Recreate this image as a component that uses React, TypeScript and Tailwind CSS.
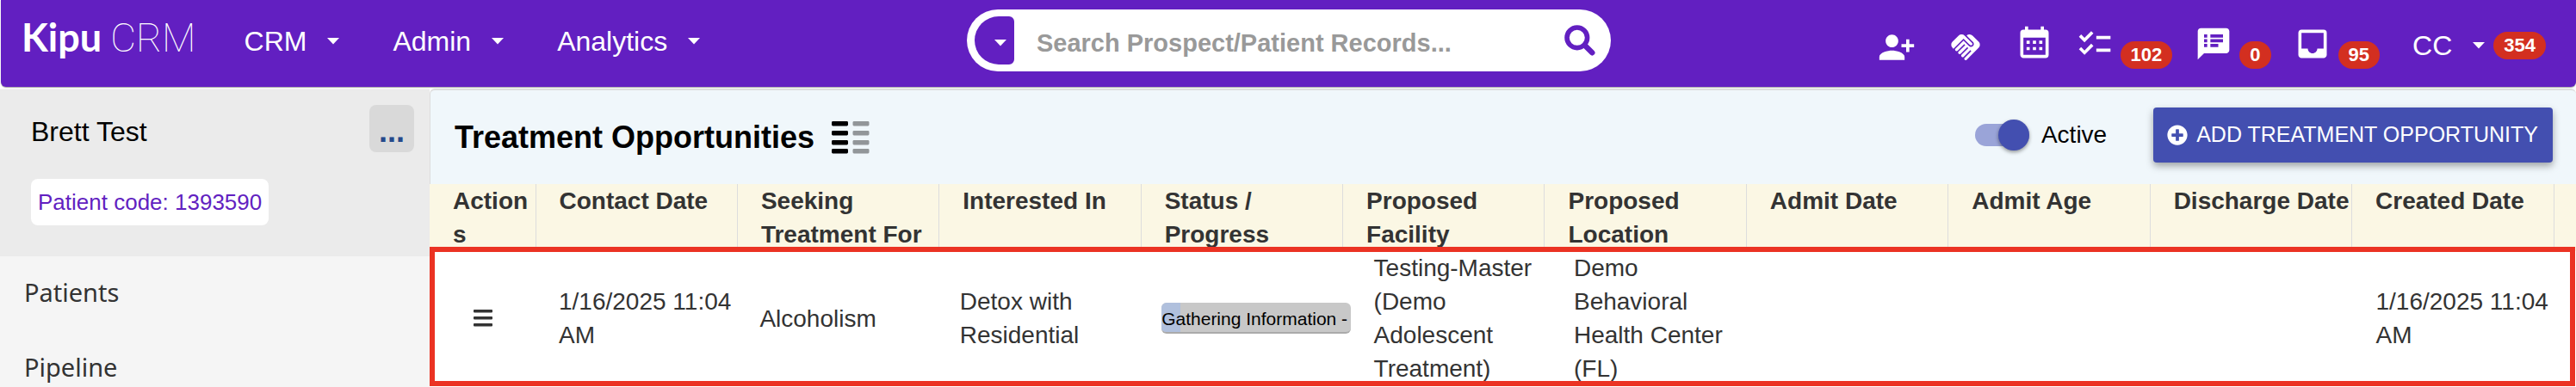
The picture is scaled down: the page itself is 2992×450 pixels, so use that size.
import type { ReactNode } from "react";
import { MdChecklist, MdHandshake, MdInbox, MdPersonAddAlt1, MdSpeakerNotes } from "react-icons/md";
import { FaPlusCircle } from "react-icons/fa";

const MENUS = ["CRM", "Admin", "Analytics"];

const COLUMNS = [
  "Contact Date",
  "Seeking Treatment For",
  "Interested In",
  "Status / Progress",
  "Proposed Facility",
  "Proposed Location",
  "Admit Date",
  "Admit Age",
  "Discharge Date",
  "Created Date",
];

function Caret() {
  return (
    <svg viewBox="0 0 14 8" className="h-2 w-3.5 shrink-0 fill-white" aria-hidden="true">
      <path d="M0 0h14L7 7.5z" />
    </svg>
  );
}

function Badge({ children }: { children: ReactNode }) {
  return (
    <span className="flex h-8 items-center rounded-full bg-[#d32f20] px-3 text-[22px] font-bold leading-8 text-white">
      {children}
    </span>
  );
}

function CalendarIcon() {
  return (
    <svg viewBox="0 0 24 24" className="size-11 fill-white" aria-hidden="true">
      <path d="M9,10V12H7V10H9M13,10V12H11V10H13M17,10V12H15V10H17M19,3A2,2 0 0,1 21,5V19A2,2 0 0,1 19,21H5C3.89,21 3,20.1 3,19V5A2,2 0 0,1 5,3H6V1H8V3H16V1H18V3H19M19,19V8H5V19H19M9,14V16H7V14H9M13,14V16H11V14H13M17,14V16H15V14H17Z" />
    </svg>
  );
}

function SearchIcon() {
  return (
    <svg viewBox="0 0 36 36" className="size-9" fill="none" stroke="#621fc1" aria-hidden="true">
      <circle cx="14.8" cy="14.8" r="11.8" strokeWidth="5.6" />
      <path d="M23.5 23.5l8.8 8.8" strokeWidth="6.4" strokeLinecap="round" />
    </svg>
  );
}

function ColumnsIcon() {
  return (
    <svg viewBox="0 0 44 38" className="h-[38px] w-11" aria-hidden="true">
      {[0, 11, 22, 32].map((y) => (
        <g key={y}>
          <rect x="0" y={y} width="19" height="5.4" rx="1.4" fill="#000" />
          <rect x="24.5" y={y} width="19" height="5.4" rx="1.4" fill="#929699" />
        </g>
      ))}
    </svg>
  );
}

function TopBar() {
  return (
    <header className="ml-px flex h-[101px] items-start justify-between rounded-b-md bg-[#621fc1] pl-6 pr-[35px] text-white shadow-[0_1px_1px_rgba(0,0,0,0.35)]">
      <div className="flex items-start">
        <a href="#home" className="flex items-baseline gap-2.5 pt-4 leading-[54px]">
          <span className="font-[Lato] text-[45px] font-bold">Kipu</span>
          <span className="font-[Roboto] text-[46px] font-thin">CRM</span>
        </a>
        <nav className="flex gap-[62px] pl-14 pt-7">
          {MENUS.map((menu) => (
            <button key={menu} type="button" className="flex items-center gap-6 text-[32px] leading-10">
              {menu}
              <Caret />
            </button>
          ))}
        </nav>
      </div>

      <form className="mt-[11px] flex h-[72px] w-[748px] items-center rounded-full bg-white pl-[9px] pr-[18px]">
        <button
          type="button"
          aria-label="Search scope"
          className="flex h-14 w-[46px] shrink-0 items-center justify-end rounded-l-[28px] rounded-r-md bg-[#621fc1] pr-[9px] pt-1.5"
        >
          <Caret />
        </button>
        <input
          type="text"
          aria-label="Search Prospect/Patient Records"
          placeholder="Search Prospect/Patient Records..."
          className="h-14 min-w-0 flex-1 bg-transparent px-[26px] pt-1.5 text-[29px] font-bold text-[#333] outline-none placeholder:text-[#999]"
        />
        <button type="submit" aria-label="Search">
          <SearchIcon />
        </button>
      </form>

      <div className="flex items-start gap-[26px] pt-[29px]">
        <div className="flex gap-9 pr-2.5 pt-1">
          <a href="#add-contact" aria-label="Add contact">
            <MdPersonAddAlt1 className="size-11" />
          </a>
          <a href="#referrals" aria-label="Referrals" className="flex size-11 items-center justify-center">
            <MdHandshake className="size-10" />
          </a>
        </div>
        <a href="#calendar" aria-label="Calendar">
          <CalendarIcon />
        </a>
        <a href="#tasks" aria-label="Tasks" className="flex items-start gap-2">
          <MdChecklist className="size-11" />
          <span className="pt-[19px]">
            <Badge>102</Badge>
          </span>
        </a>
        <a href="#messages" aria-label="Messages" className="flex items-start gap-2">
          <MdSpeakerNotes className="size-11" />
          <span className="pt-[19px]">
            <Badge>0</Badge>
          </span>
        </a>
        <a href="#inbox" aria-label="Inbox" className="flex items-start gap-2">
          <MdInbox className="size-11" />
          <span className="pt-[19px]">
            <Badge>95</Badge>
          </span>
        </a>
        <button type="button" className="flex items-center pl-3 pt-1 text-[32px] leading-10">
          CC
          <span className="flex items-center gap-2.5 pl-6">
            <Caret />
            <Badge>354</Badge>
          </span>
        </button>
      </div>
    </header>
  );
}

function Sidebar() {
  return (
    <aside className="w-[499px] shrink-0 bg-[#f5f5f5] pb-3">
      <section className="h-[194px] bg-[#ebebeb] pl-9 pr-[18px] pt-[18px]">
        <div className="flex items-center justify-between">
          <h2 className="pt-1.5 text-[32px] leading-10 text-black">Brett Test</h2>
          <button
            type="button"
            aria-label="More"
            className="flex h-[55px] w-[52px] items-center justify-center rounded-lg bg-[#d9d9d9] pt-1.5 text-4xl font-bold text-[#25498b]"
          >
            ...
          </button>
        </div>
        <p className="mt-[31px] w-fit rounded-lg bg-white px-2 text-[26px] leading-[54px] text-[#621fc1]">
          Patient code: 1393590
        </p>
      </section>
      <nav className="flex flex-col gap-[47px] pl-7 pt-[22px] font-['Noto_Sans'] text-[29px] leading-10 text-[#333]">
        <a href="#patients">Patients</a>
        <a href="#pipeline">Pipeline</a>
      </nav>
    </aside>
  );
}

function PanelHeading() {
  return (
    <div className="flex h-[111px] items-center justify-between rounded-t-md border-l border-t-2 border-[#ddd] bg-[#f0f7fb] pl-7 pr-[27px]">
      <div className="flex items-center gap-5">
        <h1 className="text-4xl font-bold leading-[52px] text-black">Treatment Opportunities</h1>
        <button type="button" aria-label="Choose columns">
          <ColumnsIcon />
        </button>
      </div>
      <div className="flex items-center gap-[54px] pb-1.5">
        <label className="flex items-center gap-3.5 text-[28px] leading-9 text-black">
          <input type="checkbox" role="switch" defaultChecked className="peer sr-only" />
          <span className="flex h-[26px] w-[63px] items-center justify-end rounded-full bg-[#9aa4d8]">
            <span className="size-9 shrink-0 rounded-full bg-[#434fb0] shadow-[0_2px_4px_rgba(0,0,0,0.4)]" />
          </span>
          Active
        </label>
        <button
          type="button"
          className="flex h-16 items-center gap-2.5 rounded bg-[#434fb0] pl-4 pr-[17px] text-[25px] text-white shadow-[0_4px_8px_rgba(0,0,0,0.35)]"
        >
          <FaPlusCircle className="size-6" />
          ADD TREATMENT OPPORTUNITY
        </button>
      </div>
    </div>
  );
}

function StatusBar() {
  return (
    <div className="relative h-9 w-[220px] overflow-hidden rounded-md border-b-2 border-[#aaa] bg-[#c8c8c8]">
      <div className="h-9 w-[10%] bg-[#b0c0dd]" />
      <span className="absolute inset-0 whitespace-nowrap text-[21px] leading-[38px] text-black">
        Gathering Information -
      </span>
    </div>
  );
}

function OpportunitiesTable() {
  return (
    <div className="relative">
      <table className="w-full table-fixed border-collapse text-[28px] leading-[39px] text-[#333]">
        <colgroup>
          <col className="w-[123px]" />
          {COLUMNS.map((name) => (
            <col key={name} />
          ))}
          <col className="w-[26px]" />
        </colgroup>
        <thead>
          <tr className="bg-[#fbf7e4] text-left align-top">
            <th className="break-words p-0 pl-[27px] pr-1">Actions</th>
            {COLUMNS.map((name) => (
              <th key={name} className="border-l border-[#ddd] p-0 pl-[27px]">
                {name}
              </th>
            ))}
            <th className="border-l border-[#ddd] p-0" />
          </tr>
        </thead>
        <tbody>
          <tr className="bg-white">
            <td className="p-0 pl-[51px]">
              <button type="button" aria-label="Row actions" className="block">
                <svg viewBox="0 0 22 20" className="h-5 w-[22px] fill-[#333]" aria-hidden="true">
                  <rect x="0" y="0" width="22" height="3.4" rx="0.8" />
                  <rect x="0" y="8" width="22" height="3.4" rx="0.8" />
                  <rect x="0" y="16" width="22" height="3.4" rx="0.8" />
                </svg>
              </button>
            </td>
            <td className="p-0 pl-[27px]">1/16/2025 11:04 AM</td>
            <td className="p-0 pl-[26px]">Alcoholism</td>
            <td className="p-0 pl-6">Detox with Residential</td>
            <td className="p-0 pl-6">
              <StatusBar />
            </td>
            <td className="p-0 pl-9">Testing-Master (Demo Adolescent Treatment)</td>
            <td className="p-0 pl-[34px]">Demo Behavioral Health Center (FL)</td>
            <td />
            <td />
            <td />
            <td className="p-0 pl-7">1/16/2025 11:04 AM</td>
            <td />
          </tr>
        </tbody>
      </table>
      <div className="pointer-events-none absolute -bottom-px left-0 right-px top-[73px] border-6 border-[#eb3323]" />
    </div>
  );
}

export default function App() {
  return (
    <div className="bg-white font-['Liberation_Sans',Arial,sans-serif]">
      <TopBar />
      <div className="flex pt-0.5">
        <div className="flex shrink-0 bg-[#f5f5f5] pt-px">
          <Sidebar />
        </div>
        <main className="min-w-0 flex-1">
          <PanelHeading />
          <OpportunitiesTable />
        </main>
      </div>
    </div>
  );
}
